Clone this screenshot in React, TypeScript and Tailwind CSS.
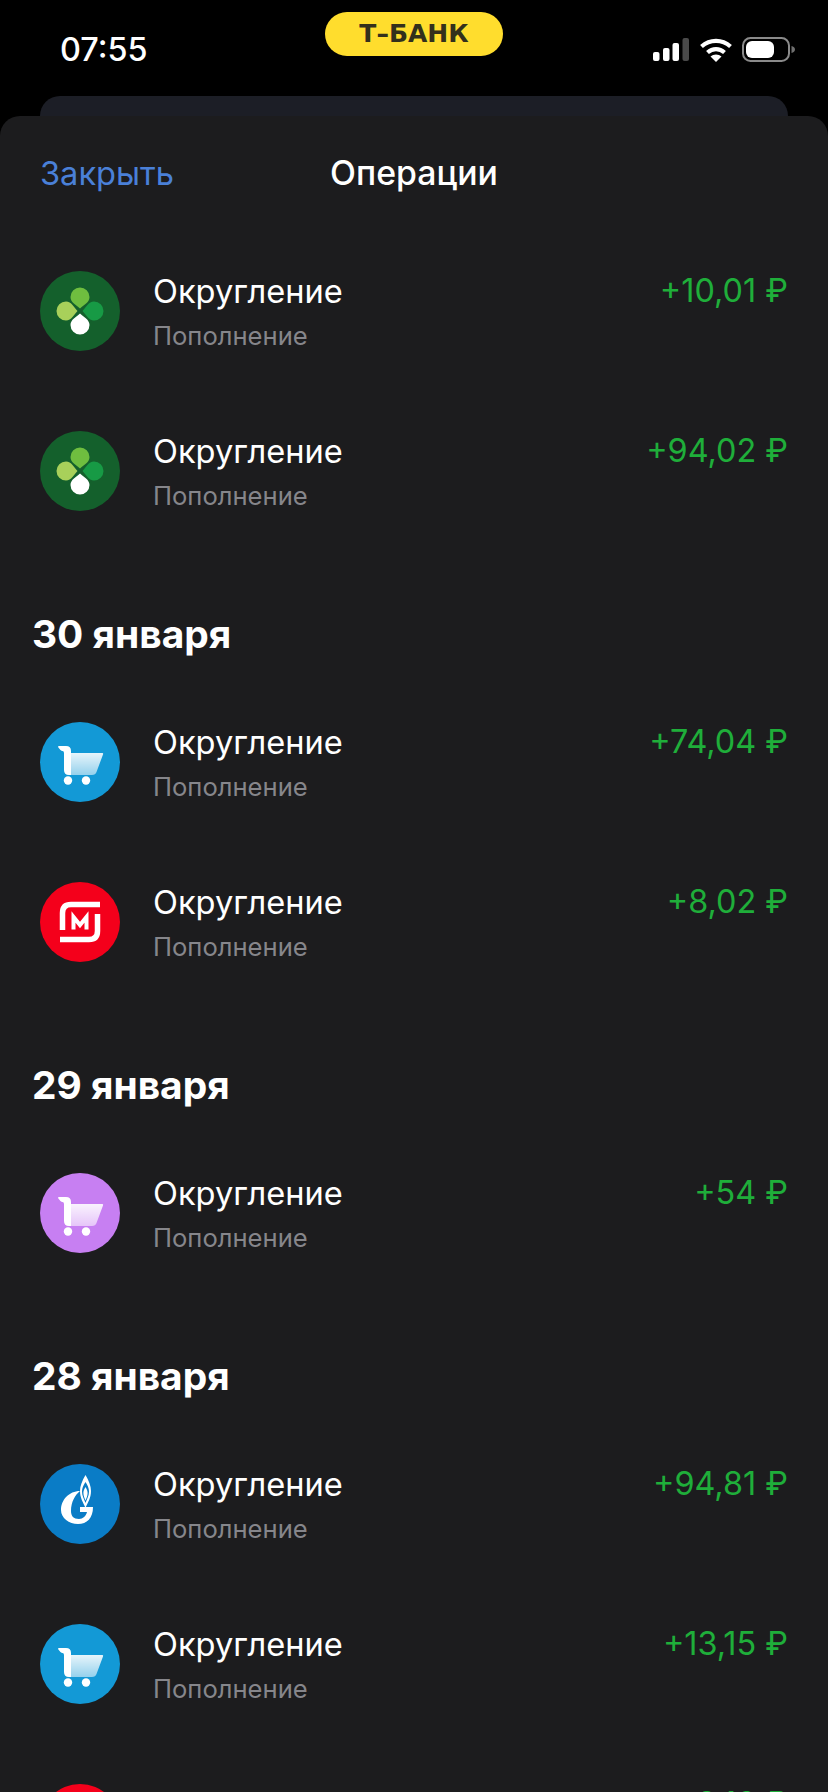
import React from 'react';

type IconKind = 'clover' | 'cartBlue' | 'cartPurple' | 'magnit' | 'gazprom';

const LEAF = 'M40 37.5C36.5 34 30.5 31.5 30.5 26A9.5 9.5 0 0 1 49.5 26C49.5 31.5 43.5 34 40 37.5Z';

function Cart({ id }: { id: string }) {
  return (
    <>
      <defs>
        <linearGradient id={id} x1="0" y1="0" x2="0" y2="1">
          <stop offset="0" stopColor="#fff" stopOpacity="0.9" />
          <stop offset="1" stopColor="#fff" stopOpacity="0.55" />
        </linearGradient>
      </defs>
      <path d="M30 31H62.5Q63.5 31 63 32.5L56.5 50Q55.5 53 52 53H30Z" fill={`url(#${id})`} />
      <path d="M19 24H26Q31 24 31 29V53H29Q24 53 24 48V31Q24 29 22.5 29H22Q20 28 18 25Q18 24 19 24Z" fill="#fff" />
      <circle cx="28" cy="58.5" r="4.2" fill="#fff" />
      <circle cx="46" cy="58.5" r="4.2" fill="#fff" />
    </>
  );
}

function Icon({ kind, uid }: { kind: IconKind; uid: string }) {
  const bg = {
    clover: 'bg-[#14602c]',
    cartBlue: 'bg-[#1399d6]',
    cartPurple: 'bg-[#c77ff2]',
    magnit: 'bg-[#f4001b]',
    gazprom: 'bg-[#0a7cc6]',
  }[kind];

  return (
    <div className={`w-20 h-20 rounded-full shrink-0 ${bg}`}>
      <svg width="80" height="80" viewBox="0 0 80 80">
        {kind === 'clover' && (
          <>
            <path d={LEAF} fill="#6fbe3f" />
            <path d={LEAF} fill="#a8d05a" transform="rotate(-90 40 40)" />
            <path d={LEAF} fill="#179a45" transform="rotate(90 40 40)" />
            <path d={LEAF} fill="#fff" transform="rotate(180 40 40)" />
          </>
        )}
        {(kind === 'cartBlue' || kind === 'cartPurple') && <Cart id={uid} />}
        {kind === 'magnit' && (
          <g fill="none" stroke="#fff">
            <path d="M60 22.5H31Q22.5 22.5 22.5 31V48" strokeWidth="5.5" />
            <path d="M20 57.5H49Q57.5 57.5 57.5 49V32" strokeWidth="5.5" />
            <path d="M33.5 47.5V35L40 43L46.5 35V47.5" strokeWidth="4" />
          </g>
        )}
        {kind === 'gazprom' && (
          <g fill="#fff">
            <path
              d="M45.5 11C42 17 40 22 40 27C40 34 43 38 45.5 44C48 38 51 34 51 27C51 22 49 17 45.5 11ZM45.5 18C47.4 21 49 24 49 27.5C49 32 46.8 35 45.5 39C44.2 35 42 32 42 27.5C42 24 43.6 21 45.5 18Z"
              fillRule="evenodd"
            />
            <path d="M45.5 23C44 25.5 43.4 27 43.4 29C43.4 32 44.6 34 45.5 36.5C46.4 34 47.6 32 47.6 29C47.6 27 47 25.5 45.5 23Z" />
            <path d="M40 27C29 27 21 36 21 46C21 54 29 60 38 60C47 60 53 54 53 43H40V48H47C46 52 43 55 39 55C33.5 55 31 52 31 47C31 38 35 31 40 27Z" />
          </g>
        )}
      </svg>
    </div>
  );
}

function OperationRow({ kind, amount, uid }: { kind: IconKind; amount: string; uid: string }) {
  return (
    <div className="h-40 shrink-0 flex items-start pl-10 pr-10 pt-10">
      <Icon kind={kind} uid={uid} />
      <div className="ml-[33px] flex-1">
        <div className="text-[32.6px] leading-10 text-white">Округление</div>
        <div className="text-[25.6px] leading-8 mt-[9px] text-[#86868b]">Пополнение</div>
      </div>
      <div className="text-[32.4px] leading-10 text-[#1fae3a]">{amount}</div>
    </div>
  );
}

function DayHeading({ children }: { children: React.ReactNode }) {
  return <h2 className="mt-[61px] mb-[26px] pl-8 text-[38.9px] leading-[44px] font-bold text-white">{children}</h2>;
}

export default function App() {
  return (
    <div className="w-[828px] h-[1792px] overflow-hidden bg-black flex flex-col font-['Inter',sans-serif]">
      {/* Status bar */}
      <div className="relative h-24 shrink-0 flex items-start justify-between pl-[60px] pr-[33px] pt-[31px]">
        <span className="text-[32.4px] leading-[38px] font-medium text-white">07:55</span>
        <div className="absolute left-[325px] top-3 w-[178px] h-11 rounded-full bg-[#ffdd2d] flex items-center justify-center text-[25px] font-bold text-[#33301c] font-['DejaVu_Sans',sans-serif]">
          Т–БАНК
        </div>
        <div className="flex items-center gap-[10.5px] pt-[6px]">
          <svg width="36" height="23" viewBox="0 0 36 23">
            <rect x="0" y="14" width="6.5" height="9" rx="2" fill="#fff" />
            <rect x="10" y="10" width="6.5" height="13" rx="2" fill="#fff" />
            <rect x="19.5" y="5" width="6.5" height="18" rx="2" fill="#fff" />
            <rect x="29.5" y="0" width="6.5" height="23" rx="2" fill="#4a4a4a" />
          </svg>
          <svg width="32" height="24" viewBox="0 0 32 24" fill="none" stroke="#fff" strokeWidth="4.2">
            <path d="M1.5 8.5C10 1 22 1 30.5 8.5" />
            <path d="M7.5 14.5C12.5 10 19.5 10 24.5 14.5" />
            <path d="M16 24L10.5 18.5C13.5 15.8 18.5 15.8 21.5 18.5Z" fill="#fff" stroke="none" />
          </svg>
          <svg width="53" height="25" viewBox="0 0 53 25">
            <rect x="1" y="1" width="46" height="23" rx="7.5" fill="none" stroke="#8a8a8a" strokeWidth="2" />
            <rect x="4" y="4" width="28" height="17" rx="6" fill="#fff" />
            <path d="M49.5 9C51.5 9.5 53 10.5 53 12.5S51.5 15.5 49.5 16Z" fill="#6f6f6f" />
          </svg>
        </div>
      </div>

      {/* Card behind the sheet */}
      <div className="h-5 shrink-0 mx-10 rounded-t-[20px] bg-[#1c1e26]" />

      {/* Sheet */}
      <div className="flex-1 flex flex-col rounded-t-[20px] bg-[#1c1c1e]">
        <div className="relative h-[115px] shrink-0 flex items-center justify-center">
          <span className="absolute left-10 text-[32.6px] text-[#4a80d8] -mt-[1px]">Закрыть</span>
          <span className="text-[33.8px] font-medium text-white -mt-[1px]">Операции</span>
        </div>

        <OperationRow kind="clover" amount="+10,01 ₽" uid="c1" />
        <OperationRow kind="clover" amount="+94,02 ₽" uid="c2" />

        <DayHeading>30 января</DayHeading>
        <OperationRow kind="cartBlue" amount="+74,04 ₽" uid="b1" />
        <OperationRow kind="magnit" amount="+8,02 ₽" uid="m1" />

        <DayHeading>29 января</DayHeading>
        <OperationRow kind="cartPurple" amount="+54 ₽" uid="p1" />

        <DayHeading>28 января</DayHeading>
        <OperationRow kind="gazprom" amount="+94,81 ₽" uid="g1" />
        <OperationRow kind="cartBlue" amount="+13,15 ₽" uid="b2" />
        <OperationRow kind="magnit" amount="+9,16 ₽" uid="m2" />
      </div>
    </div>
  );
}
